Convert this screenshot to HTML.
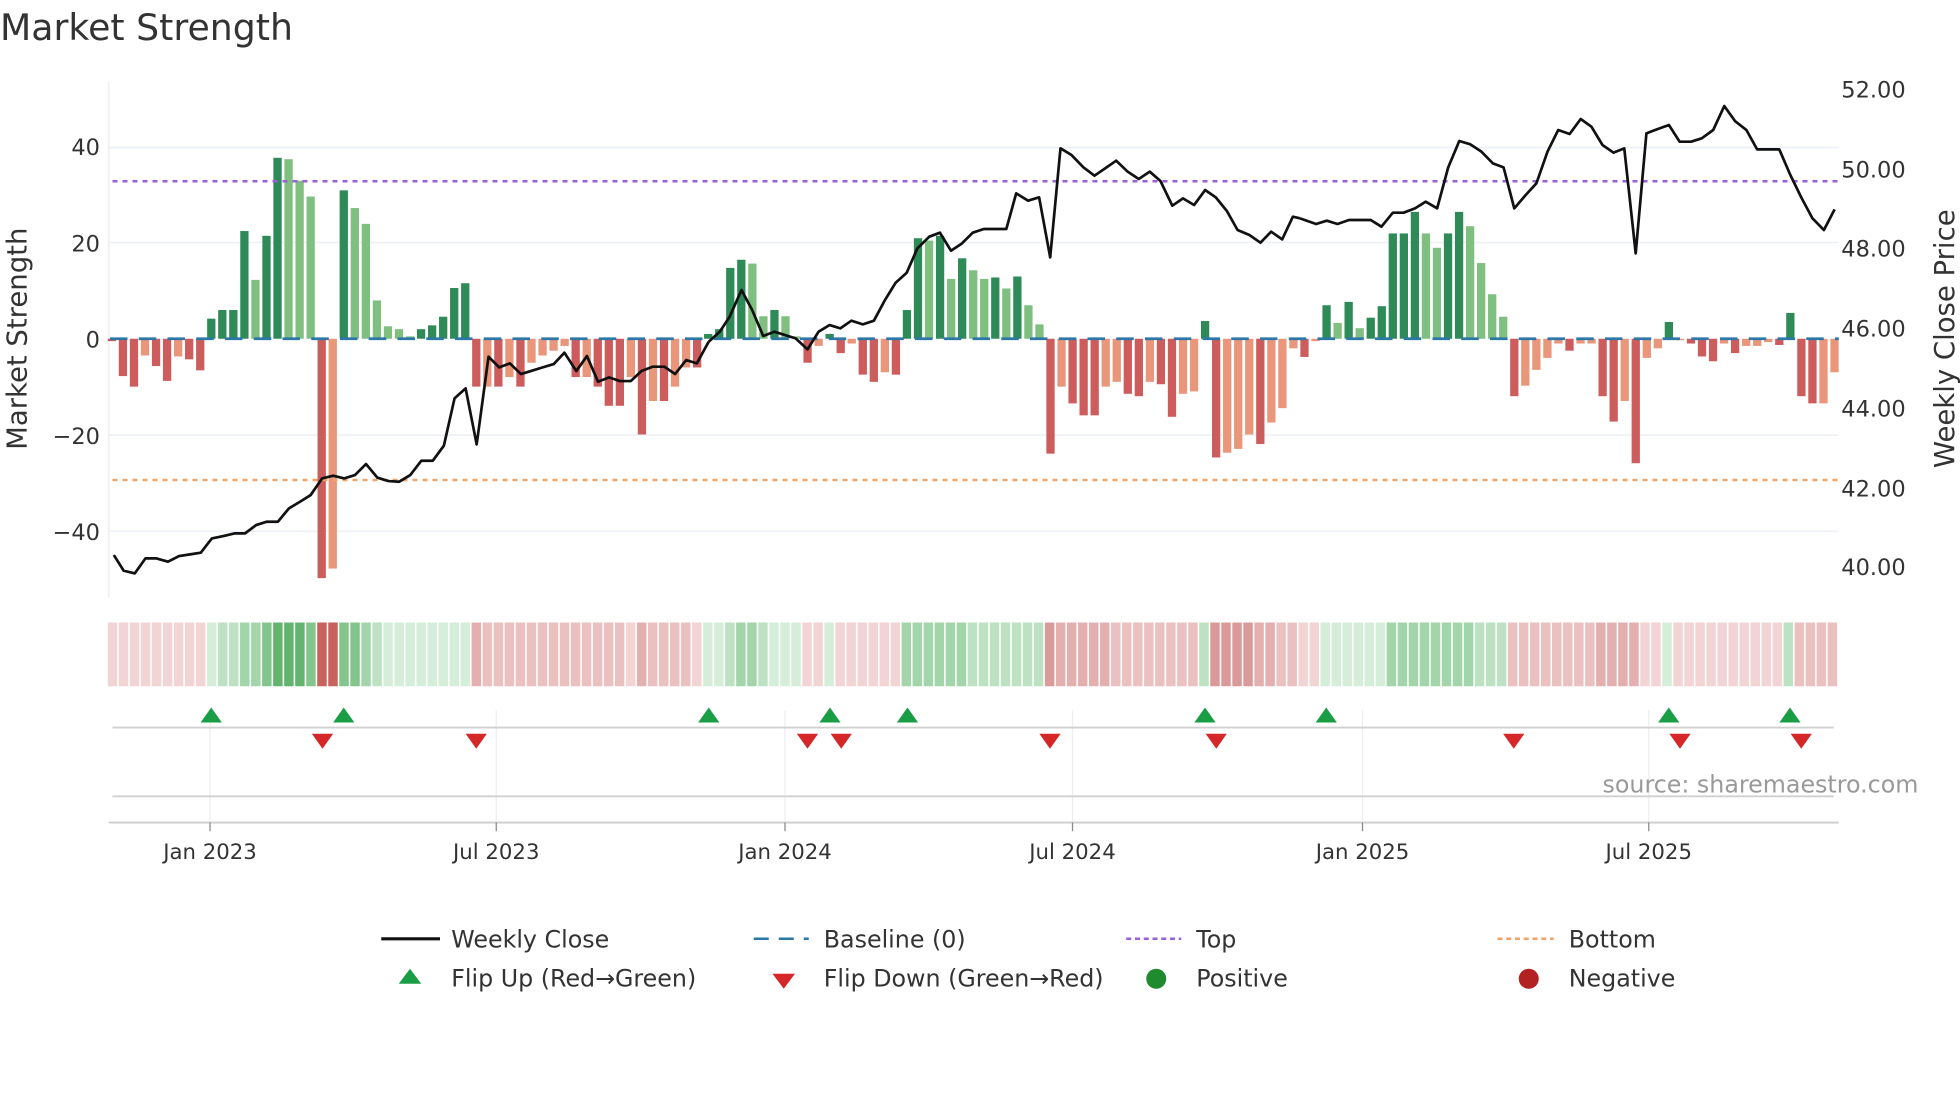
<!DOCTYPE html>
<html><head><meta charset="utf-8"><style>
html,body{margin:0;padding:0;background:#fff;}
svg{display:block;font-family:"DejaVu Sans","Liberation Sans",sans-serif;}
.a{fill:#2e8b57}.b{fill:#7fbf7f}.c{fill:#cd5c5c}.d{fill:#e9967a}
.n1{fill:#f2d4d4}.n2{fill:#ebc0c0}.n3{fill:#e4afaf}.n4{fill:#db9a9a}.n5{fill:#c8625c}
.p1{fill:#d5eed9}.p2{fill:#bde2c3}.p3{fill:#a2d5a9}.p4{fill:#84c58d}.p5{fill:#63b46f}
</style></head><body>
<svg width="1960" height="1102" viewBox="0 0 1568 881.6" xmlns="http://www.w3.org/2000/svg">
<text x="0" y="32" font-size="29" fill="#333">Market Strength</text>
<g stroke="#edf0f4" stroke-width="1.3">
<line x1="87" y1="118" x2="1471" y2="118"/><line x1="87" y1="194" x2="1471" y2="194"/>
<line x1="87" y1="348" x2="1471" y2="348"/><line x1="87" y1="425" x2="1471" y2="425"/>
<line x1="87" y1="65" x2="87" y2="478"/>
</g>
<g font-size="18" fill="#333" text-anchor="end">
<text x="80" y="124">40</text><text x="80" y="201">20</text><text x="80" y="278">0</text>
<text x="80" y="355">−20</text><text x="80" y="432">−40</text>
</g>
<g font-size="18" fill="#333">
<text x="1473" y="78">52.00</text><text x="1473" y="142">50.00</text><text x="1473" y="205">48.00</text>
<text x="1473" y="269">46.00</text><text x="1473" y="333">44.00</text><text x="1473" y="397">42.00</text>
<text x="1473" y="460">40.00</text>
</g>
<text transform="translate(21,271) rotate(-90)" font-size="22" fill="#333" text-anchor="middle">Market Strength</text>
<text transform="translate(1563,271) rotate(-90)" font-size="22" fill="#333" text-anchor="middle">Weekly Close Price</text>
<g transform="translate(86.2,271) scale(8.834,-3.83)">
<rect x="0" y="-0.5" width="0.75" height="0.5" class="c"/>
<rect x="1" y="-7.8" width="0.75" height="7.8" class="c"/>
<rect x="2" y="-10" width="0.75" height="10" class="c"/>
<rect x="3" y="-3.5" width="0.75" height="3.5" class="d"/>
<rect x="4" y="-5.7" width="0.75" height="5.7" class="c"/>
<rect x="5" y="-8.8" width="0.75" height="8.8" class="c"/>
<rect x="6" y="-3.7" width="0.75" height="3.7" class="d"/>
<rect x="7" y="-4.3" width="0.75" height="4.3" class="c"/>
<rect x="8" y="-6.6" width="0.75" height="6.6" class="c"/>
<rect x="9" y="0" width="0.75" height="4.2" class="a"/>
<rect x="10" y="0" width="0.75" height="6" class="a"/>
<rect x="11" y="0" width="0.75" height="6" class="a"/>
<rect x="12" y="0" width="0.75" height="22.5" class="a"/>
<rect x="13" y="0" width="0.75" height="12.3" class="b"/>
<rect x="14" y="0" width="0.75" height="21.5" class="a"/>
<rect x="15" y="0" width="0.75" height="37.8" class="a"/>
<rect x="16" y="0" width="0.75" height="37.5" class="b"/>
<rect x="17" y="0" width="0.75" height="33" class="b"/>
<rect x="18" y="0" width="0.75" height="29.7" class="b"/>
<rect x="19" y="-50" width="0.75" height="50" class="c"/>
<rect x="20" y="-48" width="0.75" height="48" class="d"/>
<rect x="21" y="0" width="0.75" height="31" class="a"/>
<rect x="22" y="0" width="0.75" height="27.3" class="b"/>
<rect x="23" y="0" width="0.75" height="24" class="b"/>
<rect x="24" y="0" width="0.75" height="8" class="b"/>
<rect x="25" y="0" width="0.75" height="2.6" class="b"/>
<rect x="26" y="0" width="0.75" height="2" class="b"/>
<rect x="27" y="0" width="0.75" height="0.5" class="b"/>
<rect x="28" y="0" width="0.75" height="2" class="a"/>
<rect x="29" y="0" width="0.75" height="2.8" class="a"/>
<rect x="30" y="0" width="0.75" height="4.6" class="a"/>
<rect x="31" y="0" width="0.75" height="10.6" class="a"/>
<rect x="32" y="0" width="0.75" height="11.6" class="a"/>
<rect x="33" y="-10" width="0.75" height="10" class="c"/>
<rect x="34" y="-10" width="0.75" height="10" class="d"/>
<rect x="35" y="-10" width="0.75" height="10" class="c"/>
<rect x="36" y="-8" width="0.75" height="8" class="d"/>
<rect x="37" y="-10" width="0.75" height="10" class="c"/>
<rect x="38" y="-5" width="0.75" height="5" class="d"/>
<rect x="39" y="-3.5" width="0.75" height="3.5" class="d"/>
<rect x="40" y="-2.5" width="0.75" height="2.5" class="d"/>
<rect x="41" y="-1.5" width="0.75" height="1.5" class="d"/>
<rect x="42" y="-8" width="0.75" height="8" class="c"/>
<rect x="43" y="-8" width="0.75" height="8" class="d"/>
<rect x="44" y="-10" width="0.75" height="10" class="c"/>
<rect x="45" y="-14" width="0.75" height="14" class="c"/>
<rect x="46" y="-14" width="0.75" height="14" class="c"/>
<rect x="47" y="-8" width="0.75" height="8" class="d"/>
<rect x="48" y="-20" width="0.75" height="20" class="c"/>
<rect x="49" y="-13" width="0.75" height="13" class="d"/>
<rect x="50" y="-13" width="0.75" height="13" class="c"/>
<rect x="51" y="-10" width="0.75" height="10" class="d"/>
<rect x="52" y="-6" width="0.75" height="6" class="d"/>
<rect x="53" y="-6" width="0.75" height="6" class="c"/>
<rect x="54" y="0" width="0.75" height="1" class="a"/>
<rect x="55" y="0" width="0.75" height="2" class="a"/>
<rect x="56" y="0" width="0.75" height="14.8" class="a"/>
<rect x="57" y="0" width="0.75" height="16.5" class="a"/>
<rect x="58" y="0" width="0.75" height="15.7" class="b"/>
<rect x="59" y="0" width="0.75" height="4.7" class="b"/>
<rect x="60" y="0" width="0.75" height="6" class="a"/>
<rect x="61" y="0" width="0.75" height="4.7" class="b"/>
<rect x="62" y="0" width="0.75" height="0.5" class="b"/>
<rect x="63" y="-5" width="0.75" height="5" class="c"/>
<rect x="64" y="-1.5" width="0.75" height="1.5" class="d"/>
<rect x="65" y="0" width="0.75" height="1" class="a"/>
<rect x="66" y="-3" width="0.75" height="3" class="c"/>
<rect x="67" y="-1" width="0.75" height="1" class="d"/>
<rect x="68" y="-7.5" width="0.75" height="7.5" class="c"/>
<rect x="69" y="-9" width="0.75" height="9" class="c"/>
<rect x="70" y="-7" width="0.75" height="7" class="d"/>
<rect x="71" y="-7.5" width="0.75" height="7.5" class="c"/>
<rect x="72" y="0" width="0.75" height="6" class="a"/>
<rect x="73" y="0" width="0.75" height="21" class="a"/>
<rect x="74" y="0" width="0.75" height="20.5" class="b"/>
<rect x="75" y="0" width="0.75" height="21.5" class="a"/>
<rect x="76" y="0" width="0.75" height="12.5" class="b"/>
<rect x="77" y="0" width="0.75" height="16.8" class="a"/>
<rect x="78" y="0" width="0.75" height="14.3" class="b"/>
<rect x="79" y="0" width="0.75" height="12.5" class="b"/>
<rect x="80" y="0" width="0.75" height="12.8" class="a"/>
<rect x="81" y="0" width="0.75" height="10.5" class="b"/>
<rect x="82" y="0" width="0.75" height="13" class="a"/>
<rect x="83" y="0" width="0.75" height="7" class="b"/>
<rect x="84" y="0" width="0.75" height="3" class="b"/>
<rect x="85" y="-24" width="0.75" height="24" class="c"/>
<rect x="86" y="-10" width="0.75" height="10" class="d"/>
<rect x="87" y="-13.5" width="0.75" height="13.5" class="c"/>
<rect x="88" y="-16" width="0.75" height="16" class="c"/>
<rect x="89" y="-16" width="0.75" height="16" class="c"/>
<rect x="90" y="-10" width="0.75" height="10" class="d"/>
<rect x="91" y="-9" width="0.75" height="9" class="d"/>
<rect x="92" y="-11.5" width="0.75" height="11.5" class="c"/>
<rect x="93" y="-12" width="0.75" height="12" class="c"/>
<rect x="94" y="-9" width="0.75" height="9" class="d"/>
<rect x="95" y="-9.5" width="0.75" height="9.5" class="c"/>
<rect x="96" y="-16.3" width="0.75" height="16.3" class="c"/>
<rect x="97" y="-11.5" width="0.75" height="11.5" class="d"/>
<rect x="98" y="-11" width="0.75" height="11" class="d"/>
<rect x="99" y="0" width="0.75" height="3.7" class="a"/>
<rect x="100" y="-24.8" width="0.75" height="24.8" class="c"/>
<rect x="101" y="-23.8" width="0.75" height="23.8" class="d"/>
<rect x="102" y="-23" width="0.75" height="23" class="d"/>
<rect x="103" y="-20" width="0.75" height="20" class="d"/>
<rect x="104" y="-22" width="0.75" height="22" class="c"/>
<rect x="105" y="-17.5" width="0.75" height="17.5" class="d"/>
<rect x="106" y="-14.5" width="0.75" height="14.5" class="d"/>
<rect x="107" y="-2" width="0.75" height="2" class="d"/>
<rect x="108" y="-3.8" width="0.75" height="3.8" class="c"/>
<rect x="109" y="-0.5" width="0.75" height="0.5" class="d"/>
<rect x="110" y="0" width="0.75" height="7" class="a"/>
<rect x="111" y="0" width="0.75" height="3.3" class="b"/>
<rect x="112" y="0" width="0.75" height="7.7" class="a"/>
<rect x="113" y="0" width="0.75" height="2.2" class="b"/>
<rect x="114" y="0" width="0.75" height="4.4" class="a"/>
<rect x="115" y="0" width="0.75" height="6.8" class="a"/>
<rect x="116" y="0" width="0.75" height="22" class="a"/>
<rect x="117" y="0" width="0.75" height="22" class="a"/>
<rect x="118" y="0" width="0.75" height="26.5" class="a"/>
<rect x="119" y="0" width="0.75" height="22" class="b"/>
<rect x="120" y="0" width="0.75" height="19" class="b"/>
<rect x="121" y="0" width="0.75" height="22" class="a"/>
<rect x="122" y="0" width="0.75" height="26.5" class="a"/>
<rect x="123" y="0" width="0.75" height="23.5" class="b"/>
<rect x="124" y="0" width="0.75" height="15.8" class="b"/>
<rect x="125" y="0" width="0.75" height="9.3" class="b"/>
<rect x="126" y="0" width="0.75" height="4.6" class="b"/>
<rect x="127" y="-12" width="0.75" height="12" class="c"/>
<rect x="128" y="-9.8" width="0.75" height="9.8" class="d"/>
<rect x="129" y="-6.5" width="0.75" height="6.5" class="d"/>
<rect x="130" y="-4" width="0.75" height="4" class="d"/>
<rect x="131" y="-1" width="0.75" height="1" class="d"/>
<rect x="132" y="-2.5" width="0.75" height="2.5" class="c"/>
<rect x="133" y="-1" width="0.75" height="1" class="d"/>
<rect x="134" y="-1" width="0.75" height="1" class="d"/>
<rect x="135" y="-12" width="0.75" height="12" class="c"/>
<rect x="136" y="-17.3" width="0.75" height="17.3" class="c"/>
<rect x="137" y="-13" width="0.75" height="13" class="d"/>
<rect x="138" y="-26" width="0.75" height="26" class="c"/>
<rect x="139" y="-4" width="0.75" height="4" class="d"/>
<rect x="140" y="-2" width="0.75" height="2" class="d"/>
<rect x="141" y="0" width="0.75" height="3.5" class="a"/>
<rect x="142" y="-0.3" width="0.75" height="0.3" class="d"/>
<rect x="143" y="-1" width="0.75" height="1" class="c"/>
<rect x="144" y="-3.7" width="0.75" height="3.7" class="c"/>
<rect x="145" y="-4.7" width="0.75" height="4.7" class="c"/>
<rect x="146" y="-1" width="0.75" height="1" class="d"/>
<rect x="147" y="-3" width="0.75" height="3" class="c"/>
<rect x="148" y="-1.5" width="0.75" height="1.5" class="d"/>
<rect x="149" y="-1.5" width="0.75" height="1.5" class="d"/>
<rect x="150" y="-0.7" width="0.75" height="0.7" class="d"/>
<rect x="151" y="-1.3" width="0.75" height="1.3" class="c"/>
<rect x="152" y="0" width="0.75" height="5.4" class="a"/>
<rect x="153" y="-12" width="0.75" height="12" class="c"/>
<rect x="154" y="-13.5" width="0.75" height="13.5" class="c"/>
<rect x="155" y="-13.5" width="0.75" height="13.5" class="d"/>
<rect x="156" y="-7" width="0.75" height="7" class="d"/>
</g>
<line x1="88" y1="271" x2="1471" y2="271" stroke="#2a77a8" stroke-width="2.2" stroke-dasharray="14,9"/>
<line x1="90" y1="145" x2="1471" y2="145" stroke="#9b5fd8" stroke-width="2" stroke-dasharray="4,4"/>
<line x1="90" y1="384" x2="1471" y2="384" stroke="#f2a366" stroke-width="2" stroke-dasharray="4,4"/>
<g fill="none" stroke="#111" stroke-width="2.7" stroke-linejoin="round">
<g transform="matrix(0.3162 0 0 0.2667 80 64)"><polyline vector-effect="non-scaling-stroke" points="35,1425 60,1472 88,1480 115,1435 143,1435 172,1445 200,1428 228,1423 255,1418 283,1375 312,1368 340,1360 367,1360 395,1335 422,1325 450,1325 478,1285 506,1265 533,1245 562,1195 590,1187 618,1195 645,1185 673,1152 702,1193 730,1203 757,1205 785,1185 813,1142 842,1142 870,1097 897,955 925,925 953,1093 983,830 1010,862 1037,850 1065,882 1093,872 1120,862 1148,852 1175,818 1205,873 1232,828 1260,905 1288,892 1315,903 1343,903 1370,873 1398,860 1428,860 1455,882 1483,840 1510,850 1540,785"/></g>
<g transform="matrix(0.3162 0 0 0.2667 560 64)"><polyline vector-effect="non-scaling-stroke" points="22,785 50,755 75,710 105,630 132,690 160,768 188,755 215,765 242,775 272,808 300,755 328,735 355,745 383,722 412,733 440,722 468,660 495,608 523,578 550,505 580,470 607,458 635,512 663,490 690,458 718,447 745,447 775,447 800,340 830,362 858,352 886,532 912,205 940,225 970,262 998,287 1025,265 1053,242 1082,275 1110,297 1138,275 1165,303 1195,377 1222,355 1250,375 1278,330 1305,352 1333,393 1360,450 1390,465 1418,488 1445,455 1473,478 1500,410 1518,415"/></g>
<g transform="matrix(0.2857 0 0 0.2667 1040 64)"><polyline vector-effect="non-scaling-stroke" points="0,415 45,432 75,422 105,432 137,420 168,420 198,420 228,440 260,398 290,398 322,385 352,365 384,385 415,262 446,183 477,193 508,215 540,250 570,262 600,385 632,345 662,310 693,215 723,150 755,162 786,117 816,140 847,195 878,218 908,205 940,520 970,160 1002,147 1033,135 1063,185 1095,185 1125,175 1157,150 1188,78 1218,123 1250,150 1280,208 1310,208 1342,208 1373,285 1405,355 1435,415 1467,450 1497,388"/></g>
</g>
<g transform="translate(86.2,0) scale(8.82,1)">
<rect x="0" y="498" width="0.86" height="51" class="n1"/><rect x="1" y="498" width="0.86" height="51" class="n1"/><rect x="2" y="498" width="0.86" height="51" class="n1"/><rect x="3" y="498" width="0.86" height="51" class="n1"/><rect x="4" y="498" width="0.86" height="51" class="n1"/><rect x="5" y="498" width="0.86" height="51" class="n1"/><rect x="6" y="498" width="0.86" height="51" class="n1"/><rect x="7" y="498" width="0.86" height="51" class="n1"/><rect x="8" y="498" width="0.86" height="51" class="n1"/>
<rect x="9" y="498" width="0.86" height="51" class="p1"/><rect x="10" y="498" width="0.86" height="51" class="p2"/><rect x="11" y="498" width="0.86" height="51" class="p2"/><rect x="12" y="498" width="0.86" height="51" class="p3"/><rect x="13" y="498" width="0.86" height="51" class="p3"/><rect x="14" y="498" width="0.86" height="51" class="p4"/><rect x="15" y="498" width="0.86" height="51" class="p5"/><rect x="16" y="498" width="0.86" height="51" class="p5"/><rect x="17" y="498" width="0.86" height="51" class="p5"/><rect x="18" y="498" width="0.86" height="51" class="p4"/>
<rect x="19" y="498" width="0.86" height="51" class="n5"/><rect x="20" y="498" width="0.86" height="51" class="n5"/>
<rect x="21" y="498" width="0.86" height="51" class="p4"/><rect x="22" y="498" width="0.86" height="51" class="p4"/><rect x="23" y="498" width="0.86" height="51" class="p3"/><rect x="24" y="498" width="0.86" height="51" class="p2"/><rect x="25" y="498" width="0.86" height="51" class="p1"/><rect x="26" y="498" width="0.86" height="51" class="p1"/><rect x="27" y="498" width="0.86" height="51" class="p1"/><rect x="28" y="498" width="0.86" height="51" class="p1"/><rect x="29" y="498" width="0.86" height="51" class="p1"/><rect x="30" y="498" width="0.86" height="51" class="p1"/><rect x="31" y="498" width="0.86" height="51" class="p1"/><rect x="32" y="498" width="0.86" height="51" class="p1"/>
<rect x="33" y="498" width="0.86" height="51" class="n3"/><rect x="34" y="498" width="0.86" height="51" class="n2"/><rect x="35" y="498" width="0.86" height="51" class="n2"/><rect x="36" y="498" width="0.86" height="51" class="n2"/><rect x="37" y="498" width="0.86" height="51" class="n2"/><rect x="38" y="498" width="0.86" height="51" class="n2"/><rect x="39" y="498" width="0.86" height="51" class="n2"/><rect x="40" y="498" width="0.86" height="51" class="n2"/><rect x="41" y="498" width="0.86" height="51" class="n2"/><rect x="42" y="498" width="0.86" height="51" class="n2"/><rect x="43" y="498" width="0.86" height="51" class="n2"/><rect x="44" y="498" width="0.86" height="51" class="n2"/><rect x="45" y="498" width="0.86" height="51" class="n2"/><rect x="46" y="498" width="0.86" height="51" class="n2"/><rect x="47" y="498" width="0.86" height="51" class="n1"/><rect x="48" y="498" width="0.86" height="51" class="n3"/><rect x="49" y="498" width="0.86" height="51" class="n2"/><rect x="50" y="498" width="0.86" height="51" class="n2"/><rect x="51" y="498" width="0.86" height="51" class="n2"/><rect x="52" y="498" width="0.86" height="51" class="n2"/><rect x="53" y="498" width="0.86" height="51" class="n1"/>
<rect x="54" y="498" width="0.86" height="51" class="p1"/><rect x="55" y="498" width="0.86" height="51" class="p1"/><rect x="56" y="498" width="0.86" height="51" class="p2"/><rect x="57" y="498" width="0.86" height="51" class="p3"/><rect x="58" y="498" width="0.86" height="51" class="p3"/><rect x="59" y="498" width="0.86" height="51" class="p2"/><rect x="60" y="498" width="0.86" height="51" class="p1"/><rect x="61" y="498" width="0.86" height="51" class="p1"/><rect x="62" y="498" width="0.86" height="51" class="p1"/>
<rect x="63" y="498" width="0.86" height="51" class="n1"/><rect x="64" y="498" width="0.86" height="51" class="n1"/><rect x="65" y="498" width="0.86" height="51" class="p1"/><rect x="66" y="498" width="0.86" height="51" class="n1"/><rect x="67" y="498" width="0.86" height="51" class="n1"/><rect x="68" y="498" width="0.86" height="51" class="n1"/><rect x="69" y="498" width="0.86" height="51" class="n1"/><rect x="70" y="498" width="0.86" height="51" class="n1"/><rect x="71" y="498" width="0.86" height="51" class="n1"/>
<rect x="72" y="498" width="0.86" height="51" class="p3"/><rect x="73" y="498" width="0.86" height="51" class="p3"/><rect x="74" y="498" width="0.86" height="51" class="p3"/><rect x="75" y="498" width="0.86" height="51" class="p3"/><rect x="76" y="498" width="0.86" height="51" class="p3"/><rect x="77" y="498" width="0.86" height="51" class="p3"/><rect x="78" y="498" width="0.86" height="51" class="p2"/><rect x="79" y="498" width="0.86" height="51" class="p2"/><rect x="80" y="498" width="0.86" height="51" class="p2"/><rect x="81" y="498" width="0.86" height="51" class="p2"/><rect x="82" y="498" width="0.86" height="51" class="p2"/><rect x="83" y="498" width="0.86" height="51" class="p2"/><rect x="84" y="498" width="0.86" height="51" class="p2"/>
<rect x="85" y="498" width="0.86" height="51" class="n4"/><rect x="86" y="498" width="0.86" height="51" class="n3"/><rect x="87" y="498" width="0.86" height="51" class="n3"/><rect x="88" y="498" width="0.86" height="51" class="n3"/><rect x="89" y="498" width="0.86" height="51" class="n3"/><rect x="90" y="498" width="0.86" height="51" class="n3"/><rect x="91" y="498" width="0.86" height="51" class="n2"/><rect x="92" y="498" width="0.86" height="51" class="n2"/><rect x="93" y="498" width="0.86" height="51" class="n2"/><rect x="94" y="498" width="0.86" height="51" class="n2"/><rect x="95" y="498" width="0.86" height="51" class="n2"/><rect x="96" y="498" width="0.86" height="51" class="n2"/><rect x="97" y="498" width="0.86" height="51" class="n2"/><rect x="98" y="498" width="0.86" height="51" class="n2"/>
<rect x="99" y="498" width="0.86" height="51" class="p2"/>
<rect x="100" y="498" width="0.86" height="51" class="n4"/><rect x="101" y="498" width="0.86" height="51" class="n4"/><rect x="102" y="498" width="0.86" height="51" class="n4"/><rect x="103" y="498" width="0.86" height="51" class="n4"/><rect x="104" y="498" width="0.86" height="51" class="n3"/><rect x="105" y="498" width="0.86" height="51" class="n3"/><rect x="106" y="498" width="0.86" height="51" class="n2"/><rect x="107" y="498" width="0.86" height="51" class="n2"/><rect x="108" y="498" width="0.86" height="51" class="n1"/><rect x="109" y="498" width="0.86" height="51" class="n1"/>
<rect x="110" y="498" width="0.86" height="51" class="p1"/><rect x="111" y="498" width="0.86" height="51" class="p1"/><rect x="112" y="498" width="0.86" height="51" class="p1"/><rect x="113" y="498" width="0.86" height="51" class="p1"/><rect x="114" y="498" width="0.86" height="51" class="p1"/><rect x="115" y="498" width="0.86" height="51" class="p1"/><rect x="116" y="498" width="0.86" height="51" class="p3"/><rect x="117" y="498" width="0.86" height="51" class="p3"/><rect x="118" y="498" width="0.86" height="51" class="p3"/><rect x="119" y="498" width="0.86" height="51" class="p3"/><rect x="120" y="498" width="0.86" height="51" class="p3"/><rect x="121" y="498" width="0.86" height="51" class="p3"/><rect x="122" y="498" width="0.86" height="51" class="p3"/><rect x="123" y="498" width="0.86" height="51" class="p3"/><rect x="124" y="498" width="0.86" height="51" class="p2"/><rect x="125" y="498" width="0.86" height="51" class="p2"/><rect x="126" y="498" width="0.86" height="51" class="p2"/>
<rect x="127" y="498" width="0.86" height="51" class="n2"/><rect x="128" y="498" width="0.86" height="51" class="n2"/><rect x="129" y="498" width="0.86" height="51" class="n2"/><rect x="130" y="498" width="0.86" height="51" class="n2"/><rect x="131" y="498" width="0.86" height="51" class="n2"/><rect x="132" y="498" width="0.86" height="51" class="n2"/><rect x="133" y="498" width="0.86" height="51" class="n2"/><rect x="134" y="498" width="0.86" height="51" class="n2"/><rect x="135" y="498" width="0.86" height="51" class="n3"/><rect x="136" y="498" width="0.86" height="51" class="n3"/><rect x="137" y="498" width="0.86" height="51" class="n3"/><rect x="138" y="498" width="0.86" height="51" class="n3"/><rect x="139" y="498" width="0.86" height="51" class="n1"/><rect x="140" y="498" width="0.86" height="51" class="n1"/>
<rect x="141" y="498" width="0.86" height="51" class="p1"/>
<rect x="142" y="498" width="0.86" height="51" class="n1"/><rect x="143" y="498" width="0.86" height="51" class="n1"/><rect x="144" y="498" width="0.86" height="51" class="n1"/><rect x="145" y="498" width="0.86" height="51" class="n1"/><rect x="146" y="498" width="0.86" height="51" class="n1"/><rect x="147" y="498" width="0.86" height="51" class="n1"/><rect x="148" y="498" width="0.86" height="51" class="n1"/><rect x="149" y="498" width="0.86" height="51" class="n1"/><rect x="150" y="498" width="0.86" height="51" class="n1"/><rect x="151" y="498" width="0.86" height="51" class="n1"/>
<rect x="152" y="498" width="0.86" height="51" class="p2"/>
<rect x="153" y="498" width="0.86" height="51" class="n2"/><rect x="154" y="498" width="0.86" height="51" class="n2"/><rect x="155" y="498" width="0.86" height="51" class="n2"/><rect x="156" y="498" width="0.86" height="51" class="n2"/>
</g>
<g stroke="#eceef2" stroke-width="1">
<line x1="168" y1="568" x2="168" y2="658"/><line x1="397" y1="568" x2="397" y2="658"/><line x1="628" y1="568" x2="628" y2="658"/>
<line x1="858" y1="568" x2="858" y2="658"/><line x1="1090" y1="568" x2="1090" y2="658"/><line x1="1319" y1="568" x2="1319" y2="658"/>
</g>
<line x1="90" y1="582" x2="1467" y2="582" stroke="#d0d0d0" stroke-width="1.5"/>
<line x1="90" y1="637" x2="1467" y2="637" stroke="#d0d0d0" stroke-width="1.5"/>
<line x1="87" y1="658" x2="1471" y2="658" stroke="#cccccc" stroke-width="1.5"/>
<g fill="#1a9e45">
<path d="M169 566l8.5 12h-17z"/><path d="M275 566l8.5 12h-17z"/><path d="M567 566l8.5 12h-17z"/>
<path d="M664 566l8.5 12h-17z"/><path d="M726 566l8.5 12h-17z"/><path d="M964 566l8.5 12h-17z"/>
<path d="M1061 566l8.5 12h-17z"/><path d="M1335 566l8.5 12h-17z"/><path d="M1432 566l8.5 12h-17z"/>
</g>
<g fill="#d62728">
<path d="M258 599l8.5-12h-17z"/><path d="M381 599l8.5-12h-17z"/><path d="M646 599l8.5-12h-17z"/>
<path d="M673 599l8.5-12h-17z"/><path d="M840 599l8.5-12h-17z"/><path d="M973 599l8.5-12h-17z"/>
<path d="M1211 599l8.5-12h-17z"/><path d="M1344 599l8.5-12h-17z"/><path d="M1441 599l8.5-12h-17z"/>
</g>
<text x="1282" y="634" font-size="19" fill="#999">source: sharemaestro.com</text>
<g stroke="#888" stroke-width="1">
<line x1="168" y1="658" x2="168" y2="665"/><line x1="397" y1="658" x2="397" y2="665"/><line x1="628" y1="658" x2="628" y2="665"/>
<line x1="858" y1="658" x2="858" y2="665"/><line x1="1090" y1="658" x2="1090" y2="665"/><line x1="1319" y1="658" x2="1319" y2="665"/>
</g>
<g font-size="17" fill="#333" text-anchor="middle">
<text x="168" y="687">Jan 2023</text><text x="397" y="687">Jul 2023</text><text x="628" y="687">Jan 2024</text>
<text x="858" y="687">Jul 2024</text><text x="1090" y="687">Jan 2025</text><text x="1319" y="687">Jul 2025</text>
</g>
<g font-size="19" fill="#333">
<line x1="305" y1="751" x2="352" y2="751" stroke="#111" stroke-width="2.5"/>
<text x="361" y="758">Weekly Close</text>
<line x1="603" y1="751" x2="647" y2="751" stroke="#2a77a8" stroke-width="2" stroke-dasharray="12,8"/>
<text x="659" y="758">Baseline (0)</text>
<line x1="901" y1="751" x2="945" y2="751" stroke="#9b5fd8" stroke-width="2" stroke-dasharray="4,3"/>
<text x="957" y="758">Top</text>
<line x1="1198" y1="751" x2="1243" y2="751" stroke="#f2a366" stroke-width="2" stroke-dasharray="4,3"/>
<text x="1255" y="758">Bottom</text>
<path d="M328 775l9 12h-18z" fill="#1a9e45"/>
<text x="361" y="789">Flip Up (Red→Green)</text>
<path d="M627 791l9-12h-18z" fill="#d62728"/>
<text x="659" y="789">Flip Down (Green→Red)</text>
<circle cx="925" cy="783" r="8" fill="#1f8a2e"/>
<text x="957" y="789">Positive</text>
<circle cx="1223" cy="783" r="8" fill="#b22222"/>
<text x="1255" y="789">Negative</text>
</g>
</svg>
</body></html>
